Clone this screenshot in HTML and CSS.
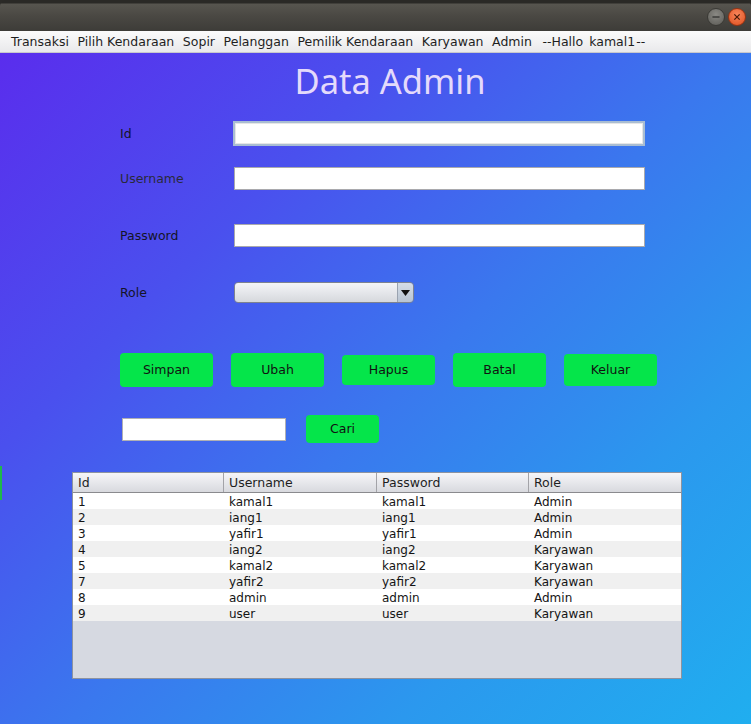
FILE: index.html
```html
<!DOCTYPE html>
<html>
<head>
<meta charset="utf-8">
<link rel="stylesheet" href="styles.css">
</head>
<body>
<div class="window">
  <div class="titlebar">
    <div class="controls">
      <span class="wbtn min"><svg width="18" height="18" viewBox="0 0 18 18"><line x1="5" y1="9" x2="13" y2="9" stroke="#2e2e2c" stroke-width="1.4"/></svg></span>
      <span class="wbtn close"><svg width="18" height="18" viewBox="0 0 18 18"><path d="M6 6 L12 12 M12 6 L6 12" stroke="#4a1a08" stroke-width="1.4"/></svg></span>
    </div>
  </div>
  <div class="menubar">
    <span class="mi">Transaksi</span>
    <span class="mi">Pilih Kendaraan</span>
    <span class="mi">Sopir</span>
    <span class="mi">Pelanggan</span>
    <span class="mi">Pemilik Kendaraan</span>
    <span class="mi">Karyawan</span>
    <span class="mi">Admin</span>
    <span class="mi hallo">--Hallo</span>
    <span class="mi user">kamal1</span>
    <span class="mi dash">--</span>
  </div>
  <div class="content">
    <div class="edge"></div>
    <h1 class="title">Data Admin</h1>
    <div class="form">
      <div class="row r-id"><label class="lbl dark">Id</label><div class="field focused"></div></div>
      <div class="row r-user"><label class="lbl">Username</label><div class="field"></div></div>
      <div class="row r-pass"><label class="lbl dark">Password</label><div class="field"></div></div>
      <div class="row r-role"><label class="lbl dark">Role</label>
        <div class="combo"><div class="combo-body"></div><div class="combo-arrow"><svg width="9" height="6" viewBox="0 0 9 6"><path d="M0 0 H9 L4.5 6 Z" fill="#111"/></svg></div></div>
      </div>
    </div>
    <div class="buttons">
      <div class="btn">Simpan</div>
      <div class="btn">Ubah</div>
      <div class="btn b-hapus">Hapus</div>
      <div class="btn">Batal</div>
      <div class="btn b-keluar">Keluar</div>
    </div>
    <div class="search">
      <div class="field search-field"></div>
      <div class="btn cari">Cari</div>
    </div>
    <div class="table">
      <div class="thead">
        <div class="th">Id</div><div class="th">Username</div><div class="th">Password</div><div class="th last">Role</div>
      </div>
      <div class="tbody">
        <div class="tr"><span>1</span><span>kamal1</span><span>kamal1</span><span>Admin</span></div>
        <div class="tr alt"><span>2</span><span>iang1</span><span>iang1</span><span>Admin</span></div>
        <div class="tr"><span>3</span><span>yafir1</span><span>yafir1</span><span>Admin</span></div>
        <div class="tr alt"><span>4</span><span>iang2</span><span>iang2</span><span>Karyawan</span></div>
        <div class="tr"><span>5</span><span>kamal2</span><span>kamal2</span><span>Karyawan</span></div>
        <div class="tr alt"><span>7</span><span>yafir2</span><span>yafir2</span><span>Karyawan</span></div>
        <div class="tr"><span>8</span><span>admin</span><span>admin</span><span>Admin</span></div>
        <div class="tr alt"><span>9</span><span>user</span><span>user</span><span>Karyawan</span></div>
      </div>
    </div>
  </div>
</div>
</body>
</html>
```

FILE: styles.css
```css
* { box-sizing: border-box; }
html, body { margin: 0; padding: 0; }
body {
  width: 751px;
  height: 724px;
  overflow: hidden;
  background: #2b2a27;
  font-family: "DejaVu Sans", "Liberation Sans", sans-serif;
  font-size: 12.5px;
}
.window {
  width: 751px;
  height: 724px;
  display: flex;
  flex-direction: column;
}
.titlebar {
  height: 31px;
  background: linear-gradient(#2a2926 0px, #2a2926 3px, #57554f 4px, #4a4843 16px, #3d3c38 31px);
  border-radius: 6px 6px 0 0;
  display: flex;
  justify-content: flex-end;
  align-items: center;
  padding-right: 5px;
  padding-top: 2px;
}
.controls { display: flex; gap: 3px; }
.wbtn {
  width: 18px; height: 18px; border-radius: 50%;
  display: flex; align-items: center; justify-content: center;
}
.wbtn.min { background: radial-gradient(circle at 50% 35%, #8a8984, #5b5a55); border: 1px solid #3a3935; }
.wbtn.close { background: radial-gradient(circle at 50% 35%, #f7855a, #e0501f); border: 1px solid #9a3312; }
.menubar {
  height: 22px;
  background: linear-gradient(#fbfbfb, #e9e9eb);
  border-bottom: 1px solid #c8c8cc;
  display: flex;
  align-items: center;
  padding-left: 11px;
  color: #1e1e1e;
  font-size: 12.5px;
}
.mi { margin-right: 8.6px; white-space: nowrap; }
.mi.hallo { margin-left: 2px; margin-right: 6px; }
.mi.user { margin-right: 1px; }
.content {
  position: relative;
  flex: 1;
  background: linear-gradient(135deg, #5a2ded 0%, #4a50ee 28%, #3a78ee 52%, #2b98ee 75%, #20aeef 100%);
  display: flex;
  flex-direction: column;
}
.edge {
  position: absolute;
  left: 0; top: 413px;
  width: 2px; height: 34px;
  background: #1fb84a;
}
.title {
  margin: 8px 0 0 0;
  height: 40px;
  line-height: 40px;
  text-align: center;
  font-family: "Noto Sans", "Open Sans", sans-serif;
  font-weight: 400;
  font-size: 34.5px;
  color: #e4dafb;
  padding-left: 29px;
}
.form {
  margin-left: 120px;
  display: flex;
  flex-direction: column;
}
.row { display: grid; grid-template-columns: 114px 411px; align-items: center; }
.r-id { margin-top: 20px; height: 25px; grid-template-columns: 113px 412px; }
.r-user { margin-top: 21px; height: 23px; }
.r-pass { margin-top: 34px; height: 23px; }
.r-role { margin-top: 35px; height: 21px; }
.lbl { color: #2a2a3a; font-size: 12.5px; }
.lbl.dark { color: #141428; }
.field {
  height: 100%;
  background: #fff;
  border: 1px solid #a9a9ad;
}
.field.focused { border: 2px solid #a9bdd2; box-shadow: inset 0 0 0 1px #e6e6e6; }
.combo {
  width: 180px; height: 21px;
  display: flex;
  border: 1px solid #7d8290;
  border-radius: 4px;
  overflow: hidden;
}
.combo-body { flex: 1; background: linear-gradient(#f4f5f7, #e2e4e8 60%, #d6d8dc); }
.combo-arrow {
  width: 16px;
  background: linear-gradient(#d5dde7, #b8c4d2);
  border-left: 1px solid #9aa3b0;
  display: flex; align-items: center; justify-content: center;
}
.buttons {
  margin-top: 50px;
  margin-left: 120px;
  display: flex;
  gap: 18px;
  align-items: center;
  height: 34px;
}
.btn {
  width: 93px;
  height: 34px;
  background: #05e54a;
  border-radius: 4px;
  display: flex;
  align-items: center;
  justify-content: center;
  color: #111;
  font-size: 12.5px;
  padding-bottom: 1px;
}
.btn.b-hapus { height: 30px; }
.btn.b-keluar { height: 32px; }
.search {
  margin-top: 28px;
  margin-left: 122px;
  display: flex;
  align-items: center;
  gap: 20px;
  height: 28px;
}
.search-field { width: 164px; height: 23px; border-color: #b0b0b4; }
.btn.cari { width: 73px; height: 28px; }
.table {
  margin-top: 29px;
  margin-left: 72px;
  width: 610px;
  height: 207px;
  border: 1px solid #8d93a0;
  background: #d6d9e1;
  display: flex;
  flex-direction: column;
}
.thead {
  height: 20px;
  display: grid;
  grid-template-columns: 151px 153px 152px 1fr;
  background: linear-gradient(#f6f6f8, #e4e5e9 60%, #d8d9de);
  border-bottom: 1px solid #8a8a8e;
}
.th {
  padding-left: 5px;
  line-height: 19px;
  color: #1e1e1e;
  border-right: 1px solid #a3a3a8;
  font-size: 12.5px;
}
.th.last { border-right: none; }
.tr {
  height: 16px;
  display: grid;
  grid-template-columns: 151px 153px 152px 1fr;
  background: #ffffff;
  color: #141414;
  font-size: 12px;
}
.tr.alt { background: #f0f0f0; }
.tr span { padding: 2px 0 0 5px; line-height: 15px; height: 16px; overflow: visible; }
```
